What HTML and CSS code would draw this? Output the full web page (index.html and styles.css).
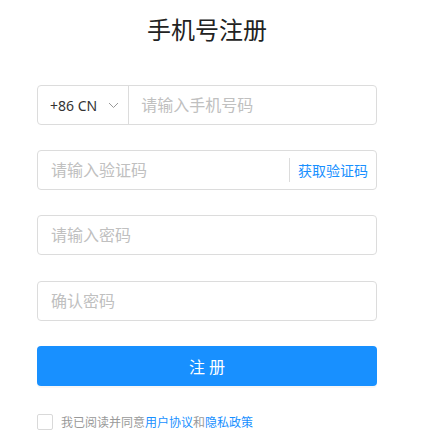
FILE: index.html
```html
<!DOCTYPE html>
<html lang="zh-CN">
<head>
    <meta charset="UTF-8">
    <meta name="viewport" content="width=device-width, initial-scale=1.0">
    <title>手机号注册</title>
    <link rel="stylesheet" href="styles.css">
</head>
<body>
    <div class="register">
        <h1 class="title">手机号注册</h1>

        <div class="field">
            <div class="country">
                <span>+86 CN</span>
                <svg class="caret" width="11" height="7" viewBox="0 0 11 7">
                    <path d="M1 1 L5.5 5.5 L10 1" fill="none" stroke="#999" stroke-width="1"/>
                </svg>
            </div>
            <input class="input" type="text" placeholder="请输入手机号码">
        </div>

        <div class="field">
            <input class="input" type="text" placeholder="请输入验证码">
            <button class="code-btn" type="button">获取验证码</button>
        </div>

        <div class="field">
            <input class="input" type="password" placeholder="请输入密码">
        </div>

        <div class="field">
            <input class="input" type="password" placeholder="确认密码">
        </div>

        <button class="submit" type="button">注 册</button>

        <label class="agree">
            <span class="checkbox"></span>
            <span>我已阅读并同意<a href="#">用户协议</a>和<a href="#">隐私政策</a></span>
        </label>
    </div>
</body>
</html>
```

FILE: styles.css
```css
body {
    margin: 0;
    font-family: "Noto Sans", "Noto Sans CJK SC", sans-serif;
    color: #333;
    background: #fff;
}
.register {
    width: 340px;
    margin-left: 37px;
    display: flex;
    flex-direction: column;
}
.title {
    margin: 12px 0 37px;
    font-size: 24px;
    font-weight: 400;
    line-height: 36px;
    text-align: center;
    color: #222;
}
.field {
    display: flex;
    align-items: center;
    height: 40px;
    box-sizing: border-box;
    border: 1px solid #dcdcdc;
    border-radius: 4px;
    margin-bottom: 25px;
}
.field:nth-of-type(3) {
    margin-bottom: 26px;
}
.country {
    display: flex;
    align-items: center;
    height: 100%;
    padding: 0 9px 0 12px;
    border-right: 1px solid #dcdcdc;
    font-size: 14px;
    color: #333;
}
.caret {
    margin-left: 11px;
}
.country + .input {
    padding-left: 12px;
}
.input {
    flex: 1;
    min-width: 0;
    height: 100%;
    border: 0;
    outline: none;
    padding: 0 13px;
    background: transparent;
    font-family: inherit;
    font-size: 16px;
    color: #333;
}
.input::placeholder {
    color: #c0c0c0;
}
.code-btn {
    border: 0;
    border-left: 1px solid #dcdcdc;
    background: transparent;
    height: 24px;
    padding: 0 8px;
    font-family: inherit;
    font-size: 14px;
    color: #1890ff;
}
.submit {
    height: 40px;
    border: 0;
    border-radius: 4px;
    background: #1890ff;
    color: #fff;
    font-family: inherit;
    font-size: 16px;
    box-shadow: 0 2px 0 rgba(0, 0, 0, 0.03);
}
.agree {
    display: flex;
    align-items: center;
    margin-top: 27px;
    font-size: 12px;
    color: #999;
}
.checkbox {
    width: 16px;
    height: 16px;
    box-sizing: border-box;
    border: 1px solid #d9d9d9;
    border-radius: 2px;
    margin-right: 8px;
}
.agree a {
    color: #1890ff;
    text-decoration: none;
}
```
